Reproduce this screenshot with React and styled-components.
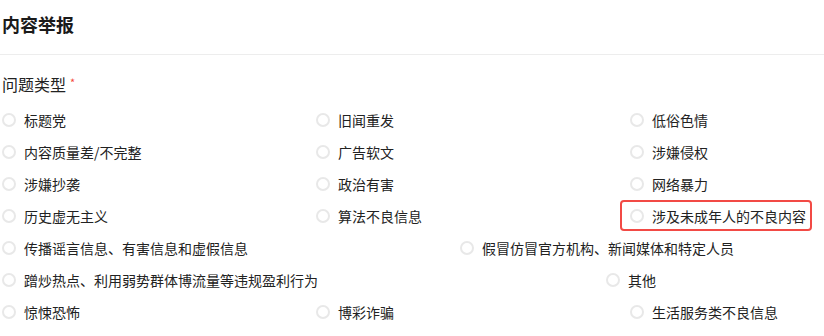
import React from "react";
import styled, { createGlobalStyle } from "styled-components";

const GlobalStyle = createGlobalStyle`
  html, body { margin: 0; padding: 0; background: #fff; }
  body {
    font-family: "Noto Sans CJK SC", "Noto Sans", "Liberation Sans", sans-serif;
    color: #222;
    -webkit-font-smoothing: antialiased;
  }
  * { box-sizing: border-box; }
`;

const Page = styled.div`
  width: 824px;
  overflow: hidden;
`;

const Header = styled.div`
  height: 55px;
  padding: 11px 0 0 2px;
  border-bottom: 1px solid #ededed;
`;

const Title = styled.h2`
  margin: 0;
  font-size: 18px;
  line-height: 26px;
  font-weight: 700;
  color: #1a1a1a;
`;

const Section = styled.div`
  padding: 17px 0 0 2px;
`;

const Label = styled.div`
  font-size: 16px;
  line-height: 24px;
  color: #222;
  display: flex;
  align-items: flex-start;
`;

const Required = styled.span`
  color: #f5483b;
  font-size: 11px;
  line-height: 14px;
  margin: 3px 0 0 4px;
`;

const Options = styled.div`
  margin-top: 8px;
  display: flex;
  flex-direction: column;
`;

const Row = styled.div`
  display: grid;
  grid-template-columns: ${(p) => p.$cols};
  height: 32px;
  align-items: center;
`;

const Option = styled.label`
  position: relative;
  display: flex;
  align-items: center;
  gap: 8px;
  width: fit-content;
  height: 22px;
  font-size: 14px;
  line-height: 22px;
  color: #222;
  white-space: nowrap;
  cursor: pointer;

  ${(p) =>
    p.$highlight &&
    `
    &::after {
      content: "";
      position: absolute;
      top: -5px;
      bottom: -4px;
      left: -10px;
      right: -6px;
      border: 2px solid #f24a45;
      border-radius: 4px;
      pointer-events: none;
    }
  `}
`;

const Radio = styled.span`
  width: 14px;
  height: 14px;
  border-radius: 50%;
  border: 2px solid #e8e8e8;
  background: #fff;
  flex: none;
`;

const rows = [
  { cols: "314px 314px 1fr", items: ["标题党", "旧闻重发", "低俗色情"] },
  { cols: "314px 314px 1fr", items: ["内容质量差/不完整", "广告软文", "涉嫌侵权"] },
  { cols: "314px 314px 1fr", items: ["涉嫌抄袭", "政治有害", "网络暴力"] },
  {
    cols: "314px 314px 1fr",
    items: ["历史虚无主义", "算法不良信息", "涉及未成年人的不良内容"],
    highlight: 2,
  },
  {
    cols: "458px 1fr",
    items: ["传播谣言信息、有害信息和虚假信息", "假冒仿冒官方机构、新闻媒体和特定人员"],
  },
  { cols: "604px 1fr", items: ["蹭炒热点、利用弱势群体博流量等违规盈利行为", "其他"] },
  { cols: "314px 314px 1fr", items: ["惊悚恐怖", "博彩诈骗", "生活服务类不良信息"] },
];

export default function App() {
  return (
    <>
      <GlobalStyle />
      <Page>
        <Header>
          <Title>内容举报</Title>
        </Header>
        <Section>
          <Label>
            问题类型<Required>*</Required>
          </Label>
          <Options>
            {rows.map((row, i) => (
              <Row key={i} $cols={row.cols}>
                {row.items.map((text, j) => (
                  <Option key={text} $highlight={row.highlight === j}>
                    <Radio />
                    {text}
                  </Option>
                ))}
              </Row>
            ))}
          </Options>
        </Section>
      </Page>
    </>
  );
}
